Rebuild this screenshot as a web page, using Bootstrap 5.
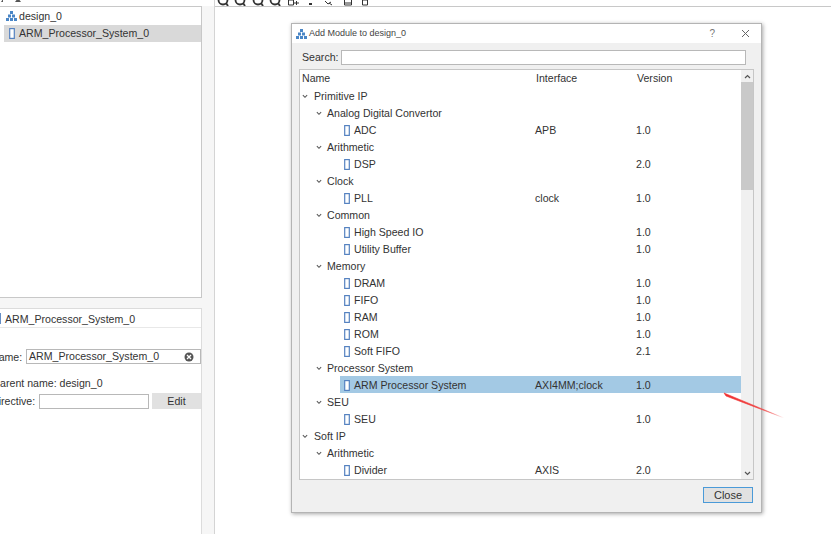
<!doctype html>
<html lang="en">
<head>
<meta charset="utf-8">
<title>Add Module</title>
<link href="https://cdn.jsdelivr.net/npm/bootstrap@5.3.0/dist/css/bootstrap.min.css" rel="stylesheet">
<style>
html,body{margin:0;background:#fff}
.ide{position:relative;width:831px;height:534px;overflow:hidden;font:10.6px/1.2 "Liberation Sans",Arial,sans-serif;color:#333;background:#fff}
.side{width:215px;flex:none;background:#f6f6f6;border-right:1px solid #d4d4d4}
.side-tools{height:6px;overflow:hidden;background:#fff}
.side-tools svg,.main-tools svg{display:block;margin-top:-7px}
.side-tree{width:203px;margin-left:-1px;background:#fff;border:1px solid #c8c8c8;padding-top:1px;height:293px}
.side-row{height:17px;padding-left:6px;gap:2px}
.side-row.sel{background:#d9d9d9;margin-left:4px;padding-left:5px;gap:4px;margin-right:0}
.side-props{margin-top:10px;width:203px;height:226px;margin-left:-1px;background:#fff;border:1px solid #dcdcdc;border-bottom:0;position:relative}
.props-head{height:19px;border-bottom:1px solid #e8e8e8;gap:4px;margin-left:-5px;padding-top:1px}
.prop-line{height:16px;white-space:nowrap}
.prop-input{height:15px;border:1px solid #b8b8b8;border-radius:0;padding:0 2px;background:#fff;font:inherit;color:#333;min-height:0;line-height:13px}
.edit-btn{width:49px;height:16px;padding:0;margin-left:3px;font:inherit;color:#333;background:#e1e1e1;border:0;border-radius:0;line-height:16px}
.name-label{margin-left:-9px;width:35px;flex:none;text-align:left;white-space:nowrap}
.dir-label{margin-left:-9px;width:48px;flex:none;white-space:nowrap}
.main-wrap{flex:1}
.main-tools{height:6px;overflow:hidden;background:#fff}
.main-pane{height:528px;border-top:1px solid #c8c8c8;background:#fff}
.dialog{position:absolute;left:291px;top:23px;width:471px;height:490px;background:#f0f0f0;border:1px solid #b4b4b4;box-shadow:1px 1px 4px rgba(0,0,0,.35)}
.dlg-title{height:19px;background:#fff;padding-left:4px;font-size:9px;color:#444;gap:2px}
.dlg-ctrl{font-size:10px;color:#777}
.dlg-search{height:26px;padding-left:10px;padding-top:2px}
.search-input{width:405px;margin-left:2px}
.tree-box{margin-left:7px;width:455px;height:411px;background:#fff;border:1px solid #c6c6c6;position:relative;overflow:hidden}
.tree-scroll{position:absolute;right:0;top:0;bottom:0;width:12px;background:#f0f0f0}
.sb-btn{height:12px}
.sb-thumb{height:108px;background:#c9c9c9}
.sb-track{flex:1}
.tree-head{height:17px;width:442px}
.tree-head div{padding-left:2px}
.tree-head .col-i{width:101px}
.row-x{height:17px;width:442px;white-space:nowrap}
.row-x>div{padding-top:2px}
.col-n{width:234px;flex:none}
.col-i{width:101px;flex:none}
.col-v{flex:1}
.leaf-n{margin-left:40px;padding-left:4px;width:195px;flex:none;gap:4px}
.sel-row{background:#a3c9e4}
.lv0{padding-left:2px;gap:6px}
.lv1{padding-left:16px;gap:5px}
.dlg-foot{padding:7px 8px 0 0}
.close-btn{width:50px;height:16px;padding:0;font:inherit;font-size:11px;color:#333;background:#e1e1e1;border:1px solid #4a9ad8;border-radius:0;line-height:14px}
.annot{position:absolute;left:715px;top:385px;pointer-events:none}
</style>
</head>
<body>
<svg width="0" height="0" class="position-absolute">
  <defs>
    <symbol id="hier" viewBox="0 0 11 10">
      <g fill="#4a86c6"><rect x="4" y="0" width="3" height="3"/><rect x="2" y="3.500" width="3" height="3"/><rect x="6" y="3.500" width="3" height="3"/><rect x="0" y="7" width="3" height="3"/><rect x="4" y="7" width="3" height="3"/><rect x="8" y="7" width="3" height="3"/></g>
    </symbol>
    <symbol id="leaf" viewBox="0 0 6 11">
      <rect x=".7" y=".6" width="4.600" height="9.800" fill="#fff" stroke="#5582c0" stroke-width="1.200"/>
    </symbol>
    <symbol id="chev" viewBox="0 0 7 5">
      <path d="M1 1l2.500 2.500L6 1" fill="none" stroke="#555" stroke-width="1.200"/>
    </symbol>
  </defs>
</svg>
<div class="ide d-flex">
  <aside class="side d-flex flex-column">
    <div class="side-tools">
      <svg width="60" height="13"><path d="M15 9l3-4 3 4zM1 9l2-3v3z" fill="#555"/></svg>
    </div>
    <div class="side-tree">
      <div class="side-row d-flex align-items-center"><svg width="11" height="10"><use href="#hier"/></svg><span>design_0</span></div>
      <div class="side-row sel d-flex align-items-center"><svg width="6" height="11"><use href="#leaf"/></svg><span>ARM_Processor_System_0</span></div>
    </div>
    <div class="side-props">
      <div class="props-head d-flex align-items-center"><svg width="6" height="11"><use href="#leaf"/></svg><span>ARM_Processor_System_0</span></div>
      <div class="d-flex align-items-center" style="margin-top:21px">
        <span class="name-label">Name:</span>
        <div class="prop-input d-flex align-items-center justify-content-between flex-fill"><span>ARM_Processor_System_0</span>
          <svg width="10" height="10" class="me-1" viewBox="0 0 10 10"><circle cx="5" cy="5" r="4.500" fill="#555"/><path d="M3 3l4 4M7 3l-4 4" stroke="#fff" stroke-width="1.300"/></svg>
        </div>
      </div>
      <div class="prop-line" style="margin-top:13px;margin-left:-7px">Parent name: design_0</div>
      <div class="d-flex align-items-center">
        <span class="dir-label">Directive:</span>
        <input class="prop-input" style="width:110px" aria-label="Directive">
        <button class="btn edit-btn" type="button">Edit</button>
      </div>
    </div>
  </aside>
  <div class="main-wrap d-flex flex-column">
    <div class="main-tools">
      <svg width="200" height="13" fill="none" stroke="#333" stroke-width="1.800">
        <g><circle cx="8" cy="7" r="4.500"/><path d="M11 10l2 3"/></g>
        <g><circle cx="25" cy="7" r="4.500"/><path d="M28 10l2 3"/></g>
        <g><circle cx="43" cy="7" r="4.500"/><path d="M46 10l2 3"/></g>
        <g><circle cx="60" cy="7" r="4.500"/><path d="M63 10l2 3"/></g>
        <path stroke-width="1" d="M73.500 7v5h5V7zM79 10h5M81.500 8v4"/>
        <path d="M94 11h3" stroke-width="2"/>
        <path stroke-width="1" d="M110 8l3 3 3-2M114 10l3 2"/>
        <path stroke-width="1" d="M129.500 6v6h7V6zM130 10h6"/>
        <path stroke-width="1" d="M147.500 7v5h5V7z"/>
      </svg>
    </div>
    <div class="main-pane"></div>
  </div>

  <div class="dialog d-flex flex-column">
    <div class="dlg-title d-flex align-items-center">
      <svg width="11" height="10"><use href="#hier"/></svg>
      <span class="flex-grow-1">Add Module to design_0</span>
      <span class="dlg-ctrl me-4">?</span>
      <svg width="9" height="9" viewBox="0 0 9 9" style="margin-right:11px"><path d="M1 1l7 7M8 1l-7 7" stroke="#666" fill="none"/></svg>
    </div>
    <div class="dlg-search d-flex align-items-center">
      <span>Search:</span>
      <input class="prop-input search-input" aria-label="Search">
    </div>
    <div class="tree-box">
      <div class="tree-head d-flex align-items-center">
        <div class="col-n">Name</div><div class="col-i">Interface</div><div class="col-v">Version</div>
      </div>
      <div class="row-x d-flex align-items-center"><div class="col-n lv0 d-flex align-items-center"><svg width="6" height="5"><use href="#chev"/></svg>Primitive IP</div></div>
      <div class="row-x d-flex align-items-center"><div class="col-n lv1 d-flex align-items-center"><svg width="6" height="5"><use href="#chev"/></svg>Analog Digital Convertor</div></div>
      <div class="row-x d-flex align-items-center"><div class="leaf-n d-flex align-items-center"><svg width="6" height="11"><use href="#leaf"/></svg>ADC</div><div class="col-i">APB</div><div class="col-v">1.0</div></div>
      <div class="row-x d-flex align-items-center"><div class="col-n lv1 d-flex align-items-center"><svg width="6" height="5"><use href="#chev"/></svg>Arithmetic</div></div>
      <div class="row-x d-flex align-items-center"><div class="leaf-n d-flex align-items-center"><svg width="6" height="11"><use href="#leaf"/></svg>DSP</div><div class="col-i"></div><div class="col-v">2.0</div></div>
      <div class="row-x d-flex align-items-center"><div class="col-n lv1 d-flex align-items-center"><svg width="6" height="5"><use href="#chev"/></svg>Clock</div></div>
      <div class="row-x d-flex align-items-center"><div class="leaf-n d-flex align-items-center"><svg width="6" height="11"><use href="#leaf"/></svg>PLL</div><div class="col-i">clock</div><div class="col-v">1.0</div></div>
      <div class="row-x d-flex align-items-center"><div class="col-n lv1 d-flex align-items-center"><svg width="6" height="5"><use href="#chev"/></svg>Common</div></div>
      <div class="row-x d-flex align-items-center"><div class="leaf-n d-flex align-items-center"><svg width="6" height="11"><use href="#leaf"/></svg>High Speed IO</div><div class="col-i"></div><div class="col-v">1.0</div></div>
      <div class="row-x d-flex align-items-center"><div class="leaf-n d-flex align-items-center"><svg width="6" height="11"><use href="#leaf"/></svg>Utility Buffer</div><div class="col-i"></div><div class="col-v">1.0</div></div>
      <div class="row-x d-flex align-items-center"><div class="col-n lv1 d-flex align-items-center"><svg width="6" height="5"><use href="#chev"/></svg>Memory</div></div>
      <div class="row-x d-flex align-items-center"><div class="leaf-n d-flex align-items-center"><svg width="6" height="11"><use href="#leaf"/></svg>DRAM</div><div class="col-i"></div><div class="col-v">1.0</div></div>
      <div class="row-x d-flex align-items-center"><div class="leaf-n d-flex align-items-center"><svg width="6" height="11"><use href="#leaf"/></svg>FIFO</div><div class="col-i"></div><div class="col-v">1.0</div></div>
      <div class="row-x d-flex align-items-center"><div class="leaf-n d-flex align-items-center"><svg width="6" height="11"><use href="#leaf"/></svg>RAM</div><div class="col-i"></div><div class="col-v">1.0</div></div>
      <div class="row-x d-flex align-items-center"><div class="leaf-n d-flex align-items-center"><svg width="6" height="11"><use href="#leaf"/></svg>ROM</div><div class="col-i"></div><div class="col-v">1.0</div></div>
      <div class="row-x d-flex align-items-center"><div class="leaf-n d-flex align-items-center"><svg width="6" height="11"><use href="#leaf"/></svg>Soft FIFO</div><div class="col-i"></div><div class="col-v">2.1</div></div>
      <div class="row-x d-flex align-items-center"><div class="col-n lv1 d-flex align-items-center"><svg width="6" height="5"><use href="#chev"/></svg>Processor System</div></div>
      <div class="row-x d-flex align-items-center"><div class="leaf-n sel-row d-flex align-items-center align-self-stretch"><svg width="6" height="11"><use href="#leaf"/></svg>ARM Processor System</div><div class="col-i sel-row align-self-stretch d-flex align-items-center">AXI4MM;clock</div><div class="col-v sel-row align-self-stretch d-flex align-items-center">1.0</div></div>
      <div class="row-x d-flex align-items-center"><div class="col-n lv1 d-flex align-items-center"><svg width="6" height="5"><use href="#chev"/></svg>SEU</div></div>
      <div class="row-x d-flex align-items-center"><div class="leaf-n d-flex align-items-center"><svg width="6" height="11"><use href="#leaf"/></svg>SEU</div><div class="col-i"></div><div class="col-v">1.0</div></div>
      <div class="row-x d-flex align-items-center"><div class="col-n lv0 d-flex align-items-center"><svg width="6" height="5"><use href="#chev"/></svg>Soft IP</div></div>
      <div class="row-x d-flex align-items-center"><div class="col-n lv1 d-flex align-items-center"><svg width="6" height="5"><use href="#chev"/></svg>Arithmetic</div></div>
      <div class="row-x d-flex align-items-center"><div class="leaf-n d-flex align-items-center"><svg width="6" height="11"><use href="#leaf"/></svg>Divider</div><div class="col-i">AXIS</div><div class="col-v">2.0</div></div>
      <div class="tree-scroll d-flex flex-column">
        <div class="sb-btn d-flex align-items-center justify-content-center"><svg width="7" height="5" style="transform:rotate(180deg)"><use href="#chev"/></svg></div>
        <div class="sb-thumb"></div>
        <div class="sb-track"></div>
        <div class="sb-btn d-flex align-items-center justify-content-center"><svg width="7" height="5"><use href="#chev"/></svg></div>
      </div>
    </div>
    <div class="dlg-foot d-flex justify-content-end">
      <button class="btn close-btn" type="button">Close</button>
    </div>
  </div>

  <svg class="annot" width="75" height="40" viewBox="0 0 75 40">
    <defs><linearGradient id="fade" gradientUnits="userSpaceOnUse" x1="9" y1="8" x2="69" y2="33"><stop offset="0" stop-color="#f03030"/><stop offset=".55" stop-color="#f04040"/><stop offset="1" stop-color="#f04040" stop-opacity="0"/></linearGradient></defs>
    <path d="M9 8l60 25-58-22z" fill="url(#fade)" stroke="url(#fade)" stroke-width=".6"/>
  </svg>
</div>
</body>
</html>
